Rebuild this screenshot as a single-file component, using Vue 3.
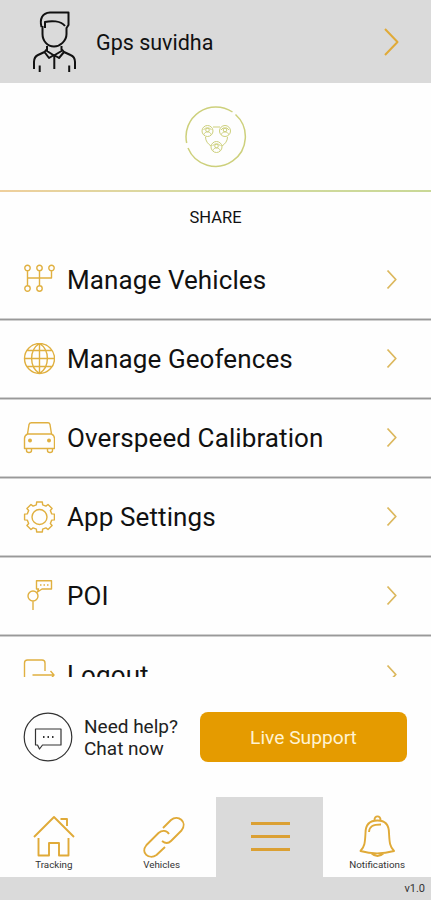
<template>
  <div class="screen">
    <header class="profile">
      <svg class="avatar" viewBox="0 0 48 64" width="48" height="64">
        <path d="M11.500 18 C9.500 10 12 4 20 3.500 H38.500 V16 L36.500 19 V25 C36.500 32 30 37.500 24 37.500 C17.500 37.500 12.500 32 12.500 25 V17 M15 19 V13 C21 11.500 31 11.500 35 17" />
        <path d="M17 37 V42 L24 46.500 L31.500 42 V37 M16.500 40.500 L14.500 43 L19 49 L24 46 L29 49 L34 43 L32 40.500 M14.500 43 L8 46 C5 47.500 4 50 4 53 V60 M34 43 L40.500 46 C44 47.500 45 50 45 53 V60 M24.300 46 V60 M9.700 56.500 V63 M39.200 56.500 V63" />
      </svg>
      <span class="name">Gps suvidha</span>
      <svg class="go" viewBox="0 0 16 32" width="16" height="32"><path d="M2 3 L14.500 16 L2 29" /></svg>
    </header>

    <section class="share">
      <div class="share-logo">
        <svg viewBox="0 0 62 62" width="62" height="62">
          <path d="M47.500 6 A29.800 29.800 0 0 0 1.700 37 M3 42 A29.800 29.800 0 1 0 50.500 8.500" />
          <g class="fine">
            <circle cx="22.500" cy="25" r="5.500" />
            <circle cx="40" cy="25" r="5.500" />
            <circle cx="31.500" cy="41" r="5.500" />
            <path d="M28 21 H35 M20.500 31 C20.500 35 23 38 26 40 M42.500 31 C42.500 35 40 38 37 40" />
            <path v-for="p in people" :key="p" :transform="p" d="M-3.500 3.500 C-3 0 3 0 3.500 3.500 M-1.800 -1 A1.800 1.800 0 1 0 1.800 -1 A1.800 1.800 0 1 0 -1.800 -1 M-4 -1 L-2 -3 H2 L4 -1" />
          </g>
        </svg>
      </div>
      <div class="share-line"></div>
      <div class="share-label">SHARE</div>
    </section>

    <main class="menu">
      <div v-for="item in items" :key="item.label" class="row">
        <svg class="row-icon" viewBox="0 0 32 32" width="32" height="32">
          <path :d="item.icon" />
          <path v-if="item.detail" class="detail" :d="item.detail" />
        </svg>
        <span class="row-label">{{ item.label }}</span>
        <svg class="row-go" viewBox="0 0 12 22" width="12" height="22"><path d="M1.500 1.500 L9.800 10.500 L1.500 19.500" /></svg>
      </div>
    </main>

    <section class="support">
      <svg class="chat" viewBox="0 0 50 50" width="50" height="50">
        <circle cx="25" cy="25" r="23.800" />
        <path d="M12.500 17 H38 V33 H19.500 L16.500 37 L14.500 33 H12.500 Z" />
        <path class="dots" d="M20 25 h1.500 M24.500 25 h1.500 M29 25 h1.500" />
      </svg>
      <p class="help">Need help?<br>Chat now</p>
      <button class="live">Live Support</button>
    </section>

    <nav class="tabs">
      <div v-for="tab in tabs" :key="tab.id" class="tab" :class="{ active: tab.id === current }" @click="current = tab.id">
        <svg viewBox="0 0 48 48" width="48" height="48" :class="tab.id"><path :d="tab.icon" /></svg>
        <span v-if="tab.label">{{ tab.label }}</span>
      </div>
    </nav>
    <footer class="version">v1.0</footer>
  </div>
</template>

<script setup>
import { ref } from 'vue'

const current = ref('more')

const people = ['translate(22.5 25)', 'translate(40 25)', 'translate(31.5 41)']

// circle as a path, so every row icon is one string
const dot = (x, y, r) => `M${x - r} ${y} a${r} ${r} 0 1 0 ${r * 2} 0 a${r} ${r} 0 1 0 ${-r * 2} 0 `

// gear outline with eight teeth
function gear() {
  const pts = []
  for (let i = 0; i < 8; i++) {
    const a = (i * Math.PI) / 4
    for (const [off, r] of [[-0.25, 12.6], [-0.19, 15.2], [0.19, 15.2], [0.25, 12.6]]) {
      pts.push(`${(16.5 + r * Math.sin(a + off)).toFixed(2)} ${(16 - r * Math.cos(a + off)).toFixed(2)}`)
    }
  }
  return 'M' + pts.join(' L') + ' Z ' + dot(16.5, 16, 7.5)
}

const items = [
  {
    label: 'Manage Vehicles',
    icon: dot(4.5, 4, 2.7) + dot(16.5, 4, 2.7) + dot(28.5, 4, 2.7) + dot(4.5, 24.5, 2.7) + dot(16.5, 24.5, 2.7) +
      'M4.500 7 V21.500 M16.500 7 V21.500 M28.500 7 V14 H4.500',
  },
  {
    label: 'Manage Geofences',
    icon: dot(16.5, 15.500, 15) +
      'M16.500 .5 V30.500 M1.500 15.500 H31.500 M4 7.500 H29 M4 23.500 H29 M16.500 .5 C6 7 6 24 16.500 30.500 M16.500 .5 C27 7 27 24 16.500 30.500',
  },
  {
    label: 'Overspeed Calibration',
    icon: 'M4.500 12 L6 2.500 Q6.500 .7 8.500 .7 H25 Q26.500 .7 27 2.500 L28.500 12 M4.500 12 H28.500 Q31.500 13.500 31.500 16.500 V26.500 H1.500 V16.500 Q1.500 13.500 4.500 12 Z M3.500 26.500 V28.500 Q3.500 30.500 6 30.500 Q8.500 30.500 8.500 28.500 V26.500 M24.500 26.500 V28.500 Q24.500 30.500 27 30.500 Q29.500 30.500 29.500 28.500 V26.500',
    detail: dot(7, 18.5, 1) + dot(26, 18.5, 1),
  },
  { label: 'App Settings', icon: gear() },
  {
    label: 'POI',
    icon: dot(10, 16, 5) + 'M10 21 V30 M13.500 .7 H28.500 V9 H19 L14.500 12 L15.500 9 H13.500 Z M17 5 h1.500 M20.500 5 h1.500 M24 5 h1.500',
  },
  {
    label: 'Logout',
    icon: 'M22 12 V4 Q22 1 19 1 H4.500 Q1.500 1 1.500 4 V27 Q1.500 30 4.500 30 H19 Q22 30 22 27 V22 M9.500 16 H31 M27.500 12 L31 16 L27.500 20',
  },
]

const tabs = [
  {
    id: 'home',
    label: 'Tracking',
    icon: 'M4 25 L24 5 L44 25 M30.500 7 H37 V14 M8.500 26 V43.500 H19 V31 H29 V43.500 H38.500 V26',
  },
  {
    id: 'link',
    label: 'Vehicles',
    icon: 'M25 16 L33 8 C40 2 50 10 43.500 18.500 L33 29 Q29 33 24 29 M31 22 C28.500 18 24 18 20.500 21 L8.500 33 C2 41 11 48 18.500 43 L27 35',
  },
  { id: 'more', label: '', icon: 'M6 11.500 H45 M6 24.500 H45 M6 37.500 H45' },
  {
    id: 'bell',
    label: 'Notifications',
    icon: 'M7.500 39 C12 34 12 30 12.500 21 C12.500 12 17 8.500 24.500 8.500 C32 8.500 36 12 36 21 C36.500 30 36.500 34 41 39 C30 42 18 42 7.500 39 Z M21.500 8.500 C21 3 28 3 27.500 8.500 M18 41 Q24.500 47 31 41 M16 20 C16.500 14 20 12.500 28 12.500',
  },
]
</script>

<style>
body {
  background: #fff;
}
</style>

<style scoped>
.screen {
  width: 431px;
  height: 900px;
  display: flex;
  flex-direction: column;
  overflow: hidden;
  background: #fefefe;
  color: #111;
  font-family: Roboto, "Liberation Sans", sans-serif;
}
svg {
  display: block;
  flex: none;
  fill: none;
  stroke: #e0aa38;
  stroke-linejoin: round;
}
.profile {
  height: 83px;
  flex: none;
  display: flex;
  align-items: center;
  padding: 0 32px 0 30px;
  background: #dadada;
}
.avatar {
  stroke: #111;
  stroke-width: 2;
  margin-bottom: 1px;
}
.name {
  flex: 1;
  margin: 2px 0 0 18px;
  font-size: 21.5px;
}
.go {
  stroke-width: 2;
}
.share {
  height: 159px;
  flex: none;
}
.share-logo {
  height: 107px;
  display: flex;
  align-items: center;
  justify-content: center;
}
.share-logo svg {
  stroke: #cdd07c;
  stroke-width: 1.5;
}
.share-logo .fine {
  stroke-width: 1;
}
.share-line {
  height: 2px;
  background: linear-gradient(90deg, #efcf9c, #d5dba2 45%, #c9d896);
}
.share-label {
  margin-top: 16px;
  text-align: center;
  font-size: 16.5px;
  line-height: 20px;
}
.menu {
  height: 435px;
  flex: none;
  overflow: hidden;
}
.row {
  box-sizing: border-box;
  height: 79px;
  display: flex;
  align-items: center;
  padding: 0 33px 3px 23px;
  background: linear-gradient(#cfcfcf, #cfcfcf 1px, #999 1px, #999 2px, #cfcfcf 2px) bottom / 100% 3px no-repeat;
}
.row-icon {
  stroke-width: 1.4;
  stroke: #e0b040;
}
.detail {
  stroke-width: 2;
}
.row-label {
  flex: 1;
  margin: 0 0 0 12px;
  font-size: 26px;
  line-height: 32px;
  letter-spacing: 0.1px;
  white-space: nowrap;
}
.row-go {
  stroke: #dcb85e;
  stroke-width: 1.8;
}
.support {
  height: 120px;
  flex: none;
  display: flex;
  align-items: center;
  padding: 0 24px 0 23px;
  box-sizing: border-box;
}
.chat {
  stroke: #333;
  stroke-width: 1.2;
}
.chat .dots {
  stroke-width: 1.8;
}
.help {
  flex: 1;
  margin: 2px 0 0 11px;
  font-size: 19px;
  line-height: 22px;
  white-space: nowrap;
  color: #222;
}
.live {
  width: 207px;
  height: 50px;
  margin-bottom: 1px;
  padding: 2px 0 0;
  border: 0;
  border-radius: 8px;
  background: #e59b00;
  color: #fff3d2;
  font: 19.2px Roboto, sans-serif;
}
.tabs {
  height: 80px;
  flex: none;
  display: grid;
  grid-template-columns: repeat(4, 1fr);
}
.tab {
  display: flex;
  flex-direction: column;
  align-items: center;
  padding-top: 15px;
}
.tab svg {
  stroke-width: 1.9;
}
.tab span {
  margin-top: -1px;
  font-size: 9.8px;
  line-height: 12px;
  color: #333;
}
.tab .more {
  stroke: #dba033;
  stroke-width: 2.8;
}
.active {
  background: #dadada;
}
.version {
  height: 23px;
  flex: none;
  padding-right: 6px;
  background: #dadada;
  text-align: right;
  font-size: 11px;
  line-height: 24px;
  color: #333;
}
</style>
